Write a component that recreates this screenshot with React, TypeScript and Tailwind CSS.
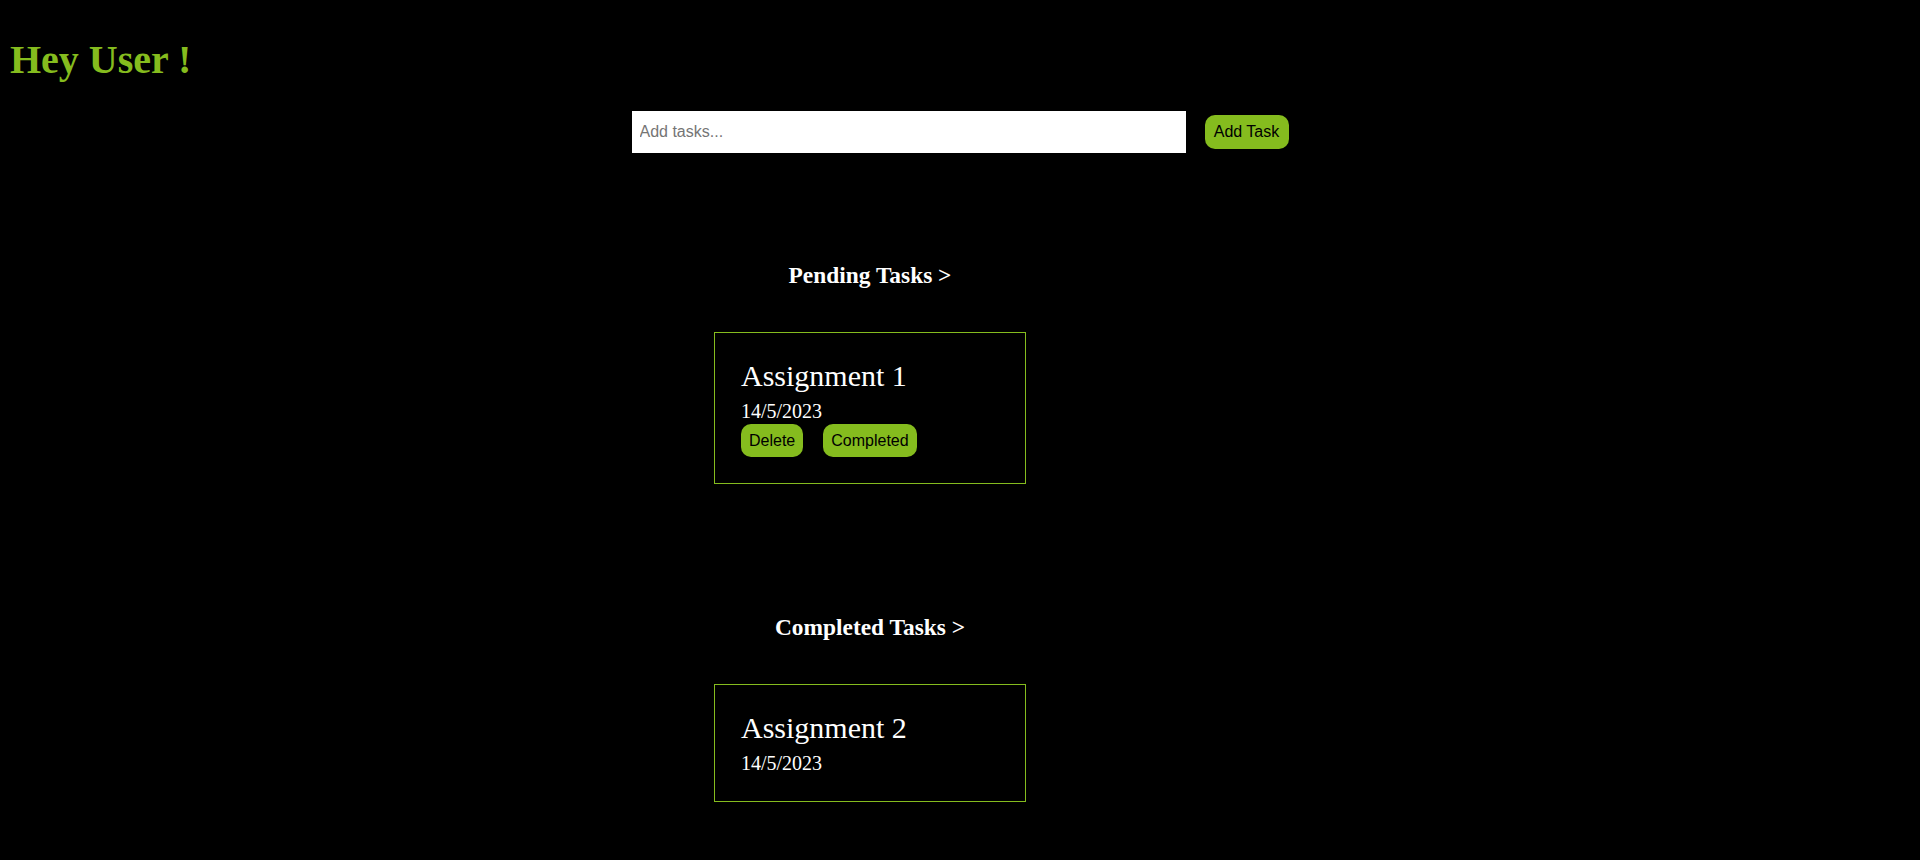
import React from "react";

const serif = "font-['Liberation_Serif','Times_New_Roman',serif]";
const sans = "font-['Liberation_Sans',Arial,sans-serif]";

function Card({ title, date, actions }: { title: string; date: string; actions?: boolean }) {
  return (
    <div className="w-[312px] border border-[#85bc1e] p-[26px] text-white">
      <div className="text-[30px] leading-[34px]">{title}</div>
      <div className="mt-[7px] text-[20px] leading-[23px]">{date}</div>
      {actions && (
        <div className="mt-[1px] flex gap-[20px]">
          <button className={`${sans} h-[33px] rounded-[10px] bg-[#85bc1e] px-2 text-[16px] text-black`}>Delete</button>
          <button className={`${sans} h-[33px] rounded-[10px] bg-[#85bc1e] px-2 text-[16px] text-black`}>Completed</button>
        </div>
      )}
    </div>
  );
}

export default function App() {
  return (
    <div className={`${serif} min-h-[860px] w-full bg-black pt-[37px]`}>
      <h1 className="pl-[10px] text-[40px] font-bold leading-[46px] text-[#85bc1e]">Hey User !</h1>
      <div className="mt-[28px] flex items-center justify-center gap-[19px]">
        <input
          type="text"
          placeholder="Add tasks..."
          className={`${sans} h-[42px] w-[554px] bg-white pl-2 text-[16px] text-black outline-none placeholder:text-[#757575]`}
        />
        <button className={`${sans} h-[34px] w-[84px] rounded-[10px] bg-[#85bc1e] text-[16px] text-black`}>Add Task</button>
      </div>
      <div className="flex w-[1740px] flex-col items-center">
        <h2 className="mt-[109px] text-[23.4px] font-bold leading-[27px] text-white">Pending Tasks &gt;</h2>
        <div className="mt-[43px]">
          <Card title="Assignment 1" date="14/5/2023" actions />
        </div>
        <h2 className="mt-[130px] text-[23.4px] font-bold leading-[27px] text-white">Completed Tasks &gt;</h2>
        <div className="mt-[43px]">
          <Card title="Assignment 2" date="14/5/2023" />
        </div>
      </div>
    </div>
  );
}
